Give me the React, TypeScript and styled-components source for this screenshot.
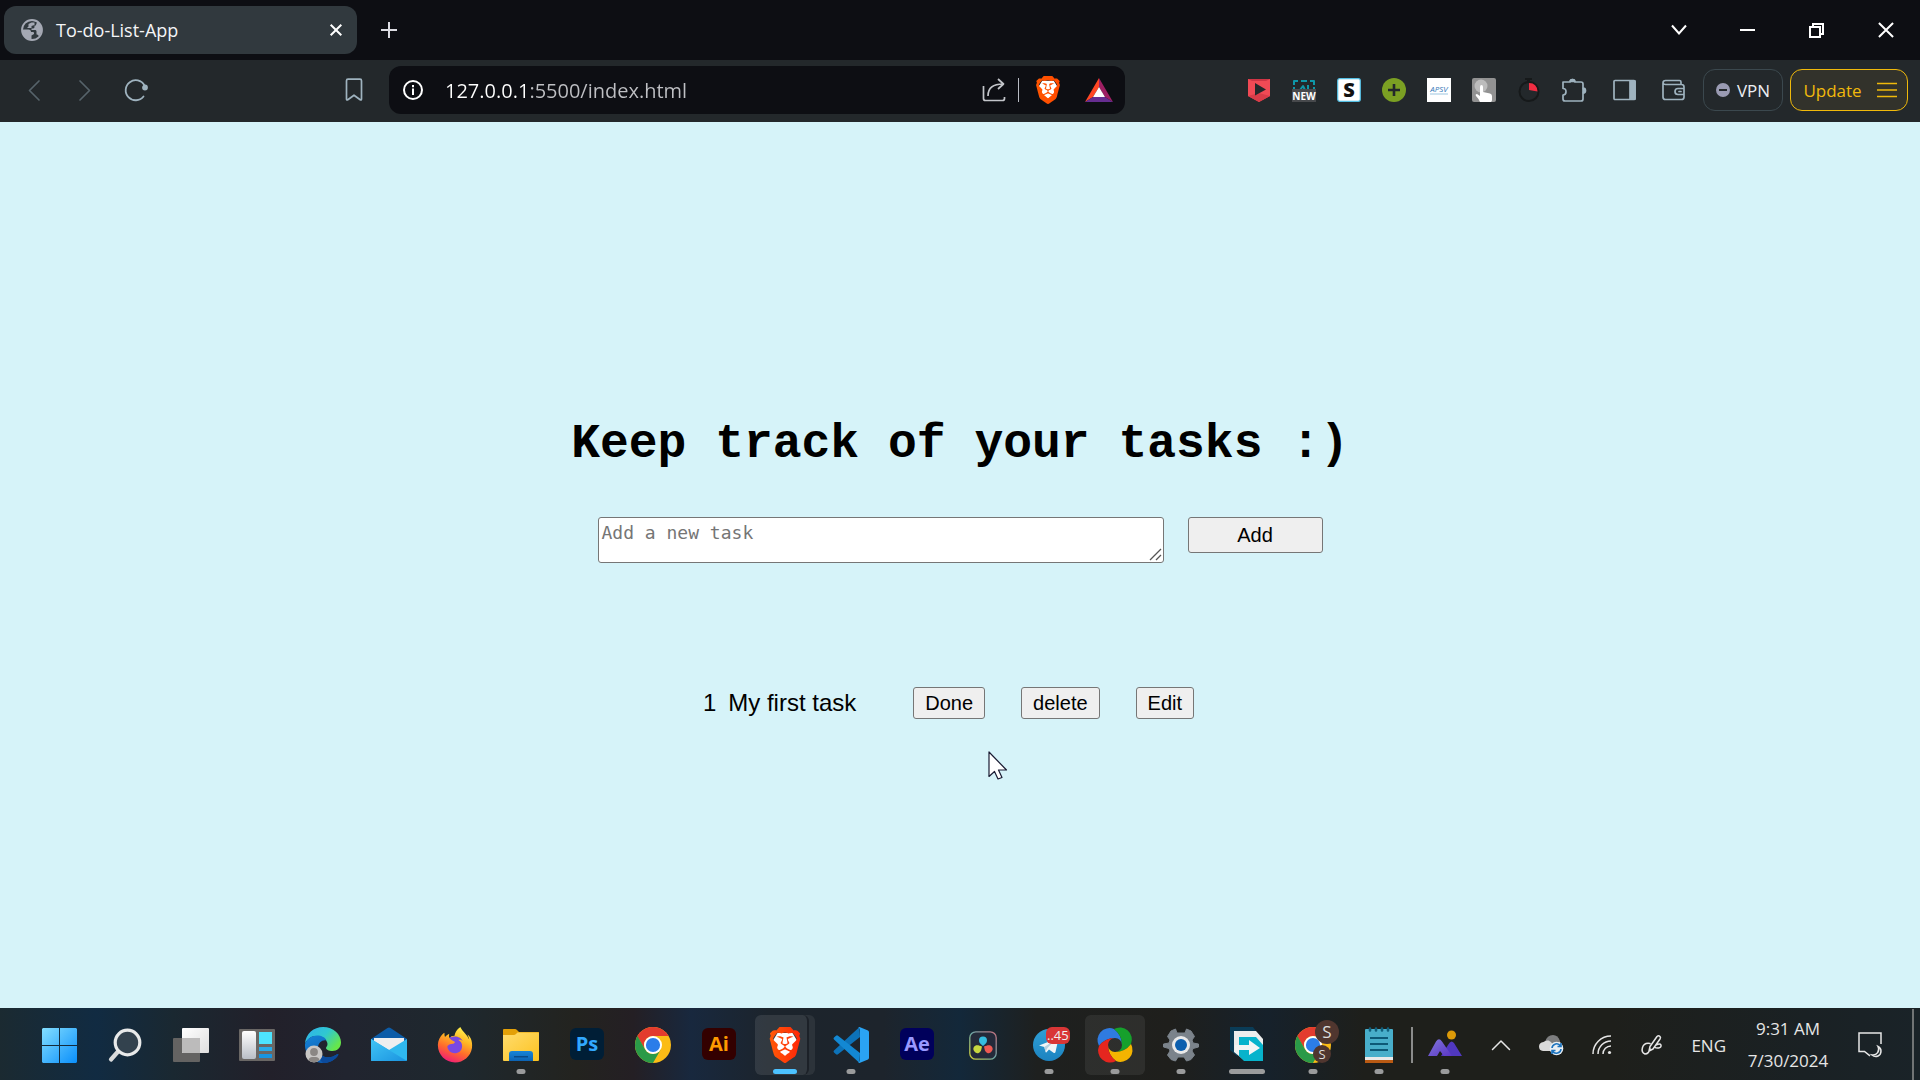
import React from 'react';
import styled, { createGlobalStyle } from 'styled-components';
import { SiBrave } from 'react-icons/si';
import { FaFirefoxBrowser } from 'react-icons/fa';

const GlobalStyle = createGlobalStyle`
  *, *::before, *::after { box-sizing: border-box; }
  body {
    margin: 0;
    font-family: "Open Sans", "Noto Sans", sans-serif;
    font-size: 17px;
  }
  button, input, textarea { font: inherit; }
  svg { display: block; flex: none; overflow: visible; }
`;

const Screen = styled.div`
  min-height: 100vh;
  display: flex;
  flex-direction: column;
`;

const PlainButton = styled.button`
  display: flex;
  align-items: center;
  justify-content: center;
  flex: none;
  padding: 0;
  border: 0;
  background: none;
  color: inherit;
  cursor: default;
`;

/* ---------- tab strip ---------- */

const TabStrip = styled.header`
  display: flex;
  align-items: center;
  height: 60px;
  padding-left: 4px;
  background: #0d0e13;
  color: #fff;
`;

const Tab = styled.div`
  display: flex;
  align-items: center;
  gap: 13px;
  width: 353px;
  height: 48px;
  padding: 0 11px 0 17px;
  border-radius: 12px;
  background: #31393e;
`;

const TabTitle = styled.span`
  flex: 1;
  color: #f4f5f7;
  font-size: 18px;
  line-height: 24px;
`;

const TabButton = styled(PlainButton)`
  width: 20px;
  height: 20px;
`;

const NewTabButton = styled(PlainButton)`
  width: 24px;
  height: 24px;
  margin-left: 20px;
`;

const WindowControls = styled.div`
  display: flex;
  margin-left: auto;
`;

const WindowButton = styled(PlainButton)`
  width: 69px;
  height: 60px;
`;

/* ---------- toolbar ---------- */

const Toolbar = styled.nav`
  display: flex;
  align-items: center;
  height: 62px;
  padding: 0 12px 2px 22px;
  background: #23282b;
  color: #9fb3bf;
`;

const NavGroup = styled.div`
  display: flex;
  gap: 27px;
`;

const ToolButton = styled(PlainButton)<{ $dim?: boolean }>`
  width: 24px;
  height: 24px;
  color: ${(p) => (p.$dim ? '#56636a' : 'inherit')};
`;

const AddressGroup = styled.div`
  display: flex;
  align-items: center;
  gap: 23px;
  margin-left: 194px;
`;

const AddressBar = styled.div`
  display: flex;
  align-items: center;
  width: 736px;
  height: 48px;
  padding: 0 12px;
  border-radius: 12px;
  background: #0d0e13;
  color: #fff;
`;

const AddressInput = styled.input`
  flex: 1;
  min-width: 0;
  height: 32px;
  margin: 0 20px;
  padding: 0;
  border: 0;
  outline: 0;
  background: linear-gradient(90deg, #fff 84px, #bfc0c4 84px);
  background-clip: text;
  -webkit-background-clip: text;
  color: transparent;
  caret-color: #fff;
  font-size: 20px;
`;

const BarDivider = styled.span`
  width: 1px;
  height: 24px;
  margin: 0 15px 0 12px;
  background: #b9bcc4;
`;

const BarButton = styled(PlainButton)`
  width: 28px;
  height: 28px;
`;

const RewardsButton = styled(BarButton)`
  margin-left: 23px;
`;

const Extensions = styled.div`
  display: flex;
  align-items: center;
  gap: 21px;
  margin-left: auto;
`;

const BrowserTools = styled.div`
  display: flex;
  align-items: center;
  gap: 26px;
  margin: 0 17px 0 20px;
`;

const VpnButton = styled(PlainButton)`
  gap: 7px;
  width: 80px;
  height: 42px;
  margin-right: 7px;
  border: 1px solid #3b484e;
  border-radius: 12px;
  color: #eceef2;
`;

const UpdateButton = styled(PlainButton)`
  gap: 15px;
  width: 118px;
  height: 42px;
  padding-left: 2px;
  border: 1px solid #f0b90b;
  border-radius: 12px;
  background: #32322b;
  color: #f0b90b;
`;

/* ---------- page ---------- */

const Page = styled.main`
  position: relative;
  flex: 1;
  display: flex;
  flex-direction: column;
  align-items: center;
  justify-content: center;
  background: #d6f3f9;
  color: #000;
  font-family: "Liberation Sans", Arial, sans-serif;
`;

const Heading = styled.h1`
  margin: 0 0 40px;
  font: bold 48px/66px "Liberation Mono", "Courier New", monospace;
`;

const TaskForm = styled.form`
  display: flex;
  align-items: flex-start;
  gap: 24px;
`;

const TaskInput = styled.textarea`
  width: 566px;
  height: 46px;
  padding: 3px;
  border: 1px solid #767676;
  border-radius: 3px;
  background: #fff;
  font: 18px/24px "DejaVu Sans Mono", monospace;
  overflow: hidden;
  resize: both;
  &::placeholder { color: #757575; opacity: 1; }
  &::-webkit-resizer {
    background: url("data:image/svg+xml,%3Csvg xmlns='http://www.w3.org/2000/svg' width='15' height='15'%3E%3Cpath d='M2 13L13 2M8 13l5-5' stroke='%23555' stroke-width='1.3'/%3E%3C/svg%3E") no-repeat;
  }
`;

const FormButton = styled.button<{ $wide?: boolean }>`
  width: ${(p) => (p.$wide ? '135px' : 'auto')};
  height: ${(p) => (p.$wide ? '36px' : '32px')};
  padding: 0 11px;
  border: 1px solid #767676;
  border-radius: 3px;
  background: #efefef;
  color: #000;
  font-size: 20px;
  line-height: 24px;
`;

const TaskList = styled.ol`
  margin: 124px 0 0;
  padding: 0 23px 0 0;
  list-style: none;
`;

const TaskRow = styled.li`
  display: flex;
  align-items: center;
  font-size: 24px;
  line-height: 32px;
`;

const TaskName = styled.span`
  margin: 0 57px 0 12px;
`;

const TaskActions = styled.div`
  display: flex;
  gap: 36px;
`;

const Pointer = styled.svg`
  position: absolute;
  left: calc(50% + 28px);
  top: calc(50% + 186px);
`;

/* ---------- taskbar ---------- */

const Taskbar = styled.footer`
  display: flex;
  align-items: center;
  height: 72px;
  padding: 2px 0 0 29px;
  color: #e6e6e6;
  background: linear-gradient(
    90deg,
    #1b2a31 0%, #112b42 5%, #1a2831 9%, #22202a 14%, #21242f 18%, #1e282e 24%,
    #23231f 30%, #241f24 33%, #18283e 36%, #1c242c 40%, #1d242c 46%, #13283a 50%,
    #1e201f 54%, #1f1f1c 61%, #16212b 66%, #1e1f1b 71%, #1e1f1b 84%, #1a2124 94%, #1a2328 100%
  );
`;

const Apps = styled.div`
  display: flex;
  gap: 6px;
`;

const AppButton = styled(PlainButton)<{ $active?: boolean }>`
  position: relative;
  width: 60px;
  height: 60px;
  border-radius: 6px;
  background: ${(p) => (p.$active ? 'rgba(255, 255, 255, 0.07)' : 'none')};
`;

const StackedTile = styled.span`
  position: absolute;
  inset: 0 6px 0 0;
  border-radius: 6px;
  border-right: 2px solid #1c2128;
  background: rgba(255, 255, 255, 0.03);
`;

const Indicator = styled.span<{ $width: number; $accent?: boolean }>`
  position: absolute;
  left: 50%;
  bottom: 1px;
  width: ${(p) => p.$width}px;
  height: 5px;
  border-radius: 3px;
  transform: translateX(-50%);
  background: ${(p) => (p.$accent ? '#4cc2ff' : '#9a9b9c')};
`;

const AdobeTile = styled.span<{ $bg: string; $fg: string }>`
  display: flex;
  align-items: center;
  justify-content: center;
  width: 34px;
  height: 32px;
  margin-bottom: 3px;
  border-radius: 6px;
  background: ${(p) => p.$bg};
  color: ${(p) => p.$fg};
  font-size: 20px;
  font-weight: 700;
  line-height: 32px;
`;

const Badge = styled.span`
  position: absolute;
  left: 27px;
  top: 12px;
  padding: 0 1px;
  border-radius: 6px;
  background: #d93636;
  color: #f0f0f0;
  font-size: 13px;
  line-height: 17px;
`;

const ProfileDot = styled.span<{ $large?: boolean }>`
  position: absolute;
  left: ${(p) => (p.$large ? '32px' : '30px')};
  top: ${(p) => (p.$large ? '5px' : '30px')};
  width: ${(p) => (p.$large ? '24px' : '18px')};
  height: ${(p) => (p.$large ? '24px' : '18px')};
  border-radius: 50%;
  background: #50362f;
  color: #ddd;
  font-size: ${(p) => (p.$large ? '17px' : '13px')};
  line-height: ${(p) => (p.$large ? '24px' : '18px')};
  text-align: center;
`;

const TaskDivider = styled.span`
  align-self: center;
  width: 2px;
  height: 36px;
  margin: 0 -4px;
  background: #8b8c8b;
`;

const Tray = styled.div`
  display: flex;
  align-items: center;
  height: 72px;
  margin-left: auto;
`;

const TrayIcons = styled.div`
  display: flex;
  align-items: center;
  gap: 27px;
`;

const TrayButton = styled(PlainButton)`
  height: 40px;
`;

const Clock = styled.time`
  width: 96px;
  margin-left: 14px;
  text-align: center;
  line-height: 32px;
`;

const NotificationButton = styled(TrayButton)`
  margin: 0 30px 0 22px;
`;

const ShowDesktop = styled(PlainButton)`
  width: 8px;
  height: 72px;
  border-left: 2px solid #717475;
`;

/* ---------- drawings ---------- */

const GlobeIcon = () => (
  <svg width="22" height="22" viewBox="0 0 22 22">
    <circle cx="11" cy="11" r="10" fill="#31393e" stroke="#a5a9b4" strokeWidth="1.8" />
    <path fill="#a5a9b4" d="M11 1c5 0 9.500 4 9.500 9.500 0 3-1 5-2.600 6.500-.8-.9-1.200-1.600-2.400-1.600v-2.800c0-1-.7-1.500-1.500-1.500h-3.500V9.400h1.700c.8 0 1.300-.6 1.300-1.400V6.500h1.300L16 3.200 11 1z" />
    <path fill="#a5a9b4" d="M1.500 10.500h6q2.500 0 2.500 2.500h2q1.500 0 1 2l-2.500 1.500V20.500C5 20.600 1 16.500 1.500 10.500z" />
    <path fill="#a5a9b4" d="M10.500 3.500L7.500 5v2.500L6 9h4.500V7l3-1V3.500z" />
  </svg>
);

const CrossIcon = ({ size = 12, stroke = 2 }: { size?: number; stroke?: number }) => (
  <svg width={size} height={size} viewBox="0 0 12 12" stroke="currentColor" strokeWidth={stroke}>
    <path d="M.7.7l10.600 10.600M11.300.7L.7 11.300" />
  </svg>
);

const LionIcon = ({ size, id }: { size: number; id: string }) => (
  <svg width={size} height={size} viewBox="0 0 24 24">
    <defs>
      <linearGradient id={id} x1="0" x2="1">
        <stop offset="0" stopColor="#ff5500" />
        <stop offset="1" stopColor={id === 'lionBar' ? '#ff4a00' : '#ff2000'} />
      </linearGradient>
    </defs>
    <path fill="#fff" d="M7 4h10l3 5-2 7-6 5-6-5-2-7z" />
    <SiBrave size={24} fill={`url(#${id})`} />
  </svg>
);

const ChromeIcon = ({ id }: { id: string }) => (
  <svg width="36" height="36" viewBox="0 0 36 36">
    <clipPath id={id}><circle cx="18" cy="18" r="18" /></clipPath>
    <g clipPath={`url(#${id})`}>
      <rect width="36" height="36" fill="#fbbc16" />
      <path fill="#e33b2e" d="M0 0h36v9H18a9 9 0 0 0-7.800 13.500L2 9z" />
      <path fill="#2a9a48" d="M2.400 9l7.800 13.500A9 9 0 0 0 25.800 22.500L18 36H0V9z" />
    </g>
    <circle cx="18" cy="18" r="9" fill="#fff" />
    <circle cx="18" cy="18" r="7.100" fill="#2b7de9" />
  </svg>
);

const StartIcon = () => (
  <svg width="35" height="35" viewBox="0 0 35 35">
    <linearGradient id="win" x1="0" y1="0" x2="1" y2="1" gradientUnits="objectBoundingBox">
      <stop offset="0" stopColor="#83deff" /><stop offset="1" stopColor="#0a8ffb" />
    </linearGradient>
    <path fill="url(#win)" d="M1 0h16v17H0V1zM18 0h16l1 1v16H18zM0 18h17v17H1l-1-1zM18 18h17v16l-1 1H18z" />
  </svg>
);

const SearchIcon = () => (
  <svg width="34" height="36" viewBox="0 0 34 36">
    <path d="M10.500 24L3 32.500" stroke="#d9dbdc" strokeWidth="4.200" strokeLinecap="round" />
    <circle cx="19.500" cy="15.500" r="12.300" fill="#33424e" stroke="#e9eaea" strokeWidth="3.200" />
  </svg>
);

const TaskViewIcon = () => (
  <svg width="36" height="36" viewBox="0 0 36 36">
    <linearGradient id="tv" x1="0" y1="0" x2="1" y2="1"><stop offset="0" stopColor="#fff" /><stop offset="1" stopColor="#dedede" /></linearGradient>
    <rect y="11" width="27" height="24" rx="1" fill="#646362" />
    <rect x="9" y="1" width="27" height="25" rx="1" fill="url(#tv)" />
    <path d="M9 11h18v15H10l-1-1z" fill="#bcbbbb" />
  </svg>
);

const WidgetsIcon = () => (
  <svg width="36" height="36" viewBox="0 0 36 36">
    <linearGradient id="wg" x1="0" y1="0" x2="0" y2="1"><stop offset="0" stopColor="#fff" /><stop offset="1" stopColor="#b9bec6" /></linearGradient>
    <rect y="2" width="36" height="32" rx="1" fill="#6a6765" />
    <rect x="3" y="4" width="14" height="28" rx="2" fill="url(#wg)" />
    <path fill="#4de4ff" d="M20 5h13v12H20z" /><path fill="#29abe9" d="M20 20h13v4H20z" /><path fill="#1795e2" d="M20 27h13v4H20z" />
  </svg>
);

const EdgeIcon = () => (
  <svg width="36" height="36" viewBox="0 0 36 36">
    <linearGradient id="edTop" x1="0" y1="0" x2="1" y2=".6"><stop offset="0" stopColor="#2fb0ee" /><stop offset=".55" stopColor="#30c8d0" /><stop offset="1" stopColor="#66e64a" /></linearGradient>
    <linearGradient id="edLow" x1="0" y1="0" x2=".5" y2="1"><stop offset="0" stopColor="#1584d8" /><stop offset="1" stopColor="#0c5bb0" /></linearGradient>
    <path fill="url(#edTop)" d="M0 17C.5 6.500 9 0 18 0c10.500 0 18 7.500 18 15.500 0 5-4 8.500-8.500 8.500-4 0-6.500-1.500-6.500-3 0-1 1.500-1.700 1.500-4C22 12 17 9 11.500 9 6 9 2 12.500 0 17z" />
    <path fill="url(#edLow)" d="M0 17C2 12 6.500 8.500 12 8.500c4.500 0 8.500 2 9.500 5-4-1-8.500 2-8.500 7.500C13 28 20 31.500 26 30c3-.6 5-2.300 6.500-3 .8-.2 1 .5.6 1.200C30 33 24.500 36 18 36 7 36-.5 27 0 17z" />
    <path fill="#0b4a9c" d="M13 20c0 8 6.500 11.500 13 10 3-.6 5-2.300 6.500-3 .8-.2 1 .5.6 1.200C30 33 24.500 36 18 36c-4-4-6-9-5-16z" />
    <circle cx="9" cy="27" r="8.500" fill="#c9c7c5" />
    <circle cx="9" cy="25" r="3.900" fill="#8b8784" />
    <path fill="#8b8784" d="M3.500 33.300C4 30.500 6 30 9 30s5 .5 5.500 3.300A8.500 8.500 0 0 1 3.500 33.300z" />
  </svg>
);

const MailIcon = () => (
  <svg width="36" height="36" viewBox="0 0 36 36">
    <linearGradient id="ml" x1="0" y1="0" x2="1" y2="1"><stop offset="0" stopColor="#41c5f5" /><stop offset="1" stopColor="#1a93e0" /></linearGradient>
    <path fill="#0c5ca8" d="M0 12L16.500 1q1.500-1 3 0L36 12v7H0z" />
    <path fill="#eeeeef" d="M3 11h30v5L18 25 3 16z" />
    <path fill="#2fb8ee" d="M36 12v21q0 1-1 1H1q-1 0-1-1V12l18 11z" />
    <path fill="url(#ml)" d="M0 12l36 22H1q-1 0-1-1z" />
  </svg>
);

const FirefoxIcon = () => (
  <svg width="36" height="36" viewBox="0 0 36 36">
    <linearGradient id="ff" x1=".7" y1="0" x2=".3" y2="1">
      <stop offset="0" stopColor="#fff44f" /><stop offset=".35" stopColor="#ffb524" /><stop offset=".65" stopColor="#ff6a2c" /><stop offset="1" stopColor="#f0197a" />
    </linearGradient>
    <circle cx="17.500" cy="19" r="10" fill="#7a48e2" />
    <FaFirefoxBrowser size={36} fill="url(#ff)" />
  </svg>
);

const FolderIcon = () => (
  <svg width="36" height="36" viewBox="0 0 36 36">
    <linearGradient id="fd" x1="0" y1="0" x2="1" y2="1"><stop offset="0" stopColor="#ffdc6e" /><stop offset="1" stopColor="#fcc21f" /></linearGradient>
    <linearGradient id="fb" x1="0" y1="0" x2="0" y2="1"><stop offset="0" stopColor="#1785d8" /><stop offset="1" stopColor="#0c63b3" /></linearGradient>
    <path fill="#e3a008" d="M0 3q0-1 1-1h11q1 0 2 1l2 2H36v8H0z" />
    <path fill="url(#fd)" d="M0 8h11q1 0 2-1l1.500-1.500H35q1 0 1 1V33q0 1-1 1H1q-1 0-1-1z" />
    <path fill="url(#fb)" d="M6 34V27q0-3 3-3h18q3 0 3 3v7z" />
    <path fill="#0a4a86" d="M11 29h14v1.500H11z" />
  </svg>
);

const CodeIcon = () => (
  <svg width="36" height="36" viewBox="0 0 36 36">
    <path fill="#0d72b8" d="M26.500 0L1 23.500q-1 1 0 2l2 1.800q1 .8 2 0L27 10z" />
    <path fill="#1388d3" d="M26.500 36L1 12.500q-1-1 0-2l2-1.800q1-.8 2 0L27 26z" />
    <path fill="#2aa3f3" d="M26.500 0L35 3.500q1 .5 1 1.700v25.600q0 1.200-1 1.700L26.500 36 25 35q2 .5 2-2V3q0-2.500-2-2z" />
  </svg>
);

const ResolveIcon = () => (
  <svg width="28" height="29" viewBox="0 0 28 29">
    <linearGradient id="rsB" x1="0" y1="1" x2="1" y2="0"><stop offset="0" stopColor="#d5d335" /><stop offset=".5" stopColor="#6ba5a5" /><stop offset="1" stopColor="#c76f7e" /></linearGradient>
    <rect x=".8" y=".8" width="26.400" height="27.400" rx="6" fill="#242a3a" stroke="url(#rsB)" strokeWidth="1.300" />
    <path fill="#35bde0" d="M14 15c-2-2-4-3-4-5.500a4 4 0 0 1 8 0c0 2.500-2 3.500-4 5.500z" />
    <path fill="#c8d740" d="M13 15.500c-.7 2.700-.6 5-2.800 6.200a4 4 0 0 1-4-6.900c2.200-1.200 4.200-.1 6.800.7z" />
    <path fill="#ee5a52" d="M15 15.500c.7 2.700.6 5 2.800 6.200a4 4 0 0 0 4-6.900c-2.200-1.200-4.200-.1-6.800.7z" />
  </svg>
);

const TelegramIcon = () => (
  <svg width="36" height="36" viewBox="0 0 36 36">
    <linearGradient id="tg" x1="0" y1="0" x2="0" y2="1"><stop offset="0" stopColor="#2f9fd6" /><stop offset="1" stopColor="#1c83c0" /></linearGradient>
    <circle cx="18" cy="18" r="16" fill="url(#tg)" />
    <path fill="#f2f5f7" d="M8 18.500L26 11.500q1.500-.4 1.200 1.300L24.500 25q-.5 1.500-2 .7L18 22.400l-2.500 2.800q-.8.6-1-.5L13.300 20z" />
    <path fill="#b9d0df" d="M13.300 20L24 13l-7.500 8-2 3.700z" />
  </svg>
);

const ringPetal = 'M17 2A12 12 0 0 1 34 17Q28 25 18 25A7 7 0 0 0 25 18Q25 8 17 2z';

const RingIcon = () => (
  <svg width="36" height="36" viewBox="0 0 36 36">
    <path fill="#2f7be0" d={ringPetal} transform="rotate(270 18 18)" />
    <path fill="#16a02c" d={ringPetal} />
    <path fill="#f4b400" d={ringPetal} transform="rotate(90 18 18)" />
    <path fill="#e5261f" d={ringPetal} transform="rotate(180 18 18)" />
  </svg>
);

const GearIcon = () => (
  <svg width="36" height="36" viewBox="0 0 36 36">
    <path fill="#7b838b" stroke="#7b838b" strokeLinejoin="round" d="M14 6L12.500 2 8 4 4.500 9.500 7 13l-1 3-5.500 1v3L6 21.500l1 2.500-2.500 4 3.500 4.500 4.500 1.500 2.500-4h6l2.500 4 4.500-1.500 3.500-4.500-2.500-4 1-2.500 5.500-1.500v-3l-5.500-1-1-3 2.500-3.500L28 4l-4.500-2L22 6z" />
    <circle cx="18" cy="18" r="9" fill="#e9e9e9" />
    <circle cx="18" cy="18" r="6" fill="#0c5fae" />
  </svg>
);

const ArrowAppIcon = () => (
  <svg width="36" height="36" viewBox="0 0 36 36">
    <path fill="#0a3c57" d="M1 0h23l3 4-19 25L1 23z" />
    <path fill="#eceeee" d="M5 4h22l7 8v22H16L5 25z" />
    <path fill="#07b3cc" d="M10 10h17l7 8v16H15l-5-5z" />
    <path fill="#f3f5f5" d="M6 18h14v-5l11 8-11 7v-5H6z" />
  </svg>
);

const NotepadIcon = () => (
  <svg width="30" height="36" viewBox="0 0 30 36">
    <path fill="#b95a13" d="M1 31h28v5H1z" /><path fill="#e9e9e9" d="M1 29h28v4H1z" />
    <path fill="#48aeca" d="M2 2h26q1 0 1 1v27H1V3q0-1 1-1z" />
    <path stroke="#0d5977" strokeWidth="2" d="M6 11h18M6 17h18M6 23h18" />
    <path stroke="#11607d" strokeWidth="2.600" strokeLinecap="round" d="M6 1.500v2M12 1.500v2M18 1.500v2M24 1.500v2" />
  </svg>
);

const PeaksIcon = () => (
  <svg width="36" height="36" viewBox="0 0 36 36">
    <linearGradient id="pk" x1="0" y1="0" x2="1" y2="1"><stop offset="0" stopColor="#8177d8" /><stop offset="1" stopColor="#5a35c6" /></linearGradient>
    <circle cx="24.500" cy="8" r="4.500" fill="#dc9a08" />
    <path fill="#5038bf" d="M14 29l7-11q3-6 6-2l8 13z" />
    <path fill="url(#pk)" d="M1 29L9 14.500q3-4.500 6 0L25 29h-8l-4-5-3 5z" />
  </svg>
);

const lineProps = { fill: 'none', stroke: 'currentColor', strokeLinecap: 'round' as const, strokeLinejoin: 'round' as const };

const adobe = (label: string, bg: string, fg: string) => <AdobeTile $bg={bg} $fg={fg}>{label}</AdobeTile>;

interface AppItem {
  name: string;
  icon: React.ReactNode;
  bar?: number;
  accent?: boolean;
  active?: boolean;
}

const pinnedApps: AppItem[] = [
  { name: 'Start', icon: <StartIcon /> },
  { name: 'Search', icon: <SearchIcon /> },
  { name: 'Task view', icon: <TaskViewIcon /> },
  { name: 'Widgets', icon: <WidgetsIcon /> },
  { name: 'Edge', icon: <EdgeIcon /> },
  { name: 'Mail', icon: <MailIcon /> },
  { name: 'Firefox', icon: <FirefoxIcon /> },
  { name: 'File Explorer', icon: <FolderIcon />, bar: 9 },
  { name: 'Photoshop', icon: adobe('Ps', '#001e36', '#31a8ff') },
  { name: 'Chrome', icon: <ChromeIcon id="chromeA" /> },
  { name: 'Illustrator', icon: adobe('Ai', '#330000', '#ff9a00') },
  { name: 'Brave', icon: <><StackedTile /><LionIcon size={36} id="lionTask" /></>, bar: 24, accent: true, active: true },
  { name: 'Visual Studio Code', icon: <CodeIcon />, bar: 9 },
  { name: 'After Effects', icon: adobe('Ae', '#00005b', '#9999ff') },
  { name: 'DaVinci Resolve', icon: <ResolveIcon /> },
  { name: 'Telegram', icon: <><TelegramIcon /><Badge>..45</Badge></>, bar: 9 },
  { name: 'Screen recorder', icon: <RingIcon />, bar: 9, active: true },
  { name: 'Settings', icon: <GearIcon />, bar: 9 },
  { name: 'File transfer', icon: <ArrowAppIcon />, bar: 36 },
  { name: 'Chrome profile', icon: <><ChromeIcon id="chromeB" /><ProfileDot $large>S</ProfileDot><ProfileDot>S</ProfileDot></>, bar: 9 },
  { name: 'Notepad', icon: <NotepadIcon />, bar: 9 },
];

const TaskbarApp = ({ item }: { item: AppItem }) => (
  <AppButton aria-label={item.name} $active={item.active}>
    {item.icon}
    {item.bar && <Indicator $width={item.bar} $accent={item.accent} />}
  </AppButton>
);

const extensions: { name: string; icon: React.ReactNode }[] = [
  { name: 'Video', icon: (
    <svg width="24" height="24" viewBox="0 0 24 24">
      <path fill="#f04a55" d="M1 1h22v17l-11 6-11-6z" /><path fill="#cf3545" d="M1 1h22l-4 2H5z" /><path fill="#d93c49" d="M1 18l11-3 11 3-11 6z" />
      <path fill="#23282b" d="M8 5l11 6.500-11 6z" />
    </svg>) },
  { name: 'Capture', icon: (
    <svg width="24" height="24" viewBox="0 0 24 24">
      <path {...lineProps} stroke="#0f97a8" strokeWidth="2" strokeLinecap="butt" d="M2 7V3h4M9 3h6M18 3h4v4M2 9v3M22 9v3M8 12l3-4 2 4M16 7v5" />
      <path fill="#47494c" d="M0 11h24v13H0z" />
      <text x="12" y="21.500" textAnchor="middle" fontFamily="Open Sans" fontSize="10" fontWeight="700" fill="#fff">NEW</text>
    </svg>) },
  { name: 'S', icon: (
    <svg width="24" height="24" viewBox="0 0 24 24">
      <rect x=".7" y=".7" width="22.600" height="22.600" rx="2" fill="#fff" stroke="#54bfe4" strokeWidth="1.200" />
      <text x="12" y="19" textAnchor="middle" fontFamily="Open Sans" fontSize="20" fontWeight="800" fill="#111">S</text>
    </svg>) },
  { name: 'Add', icon: (
    <svg width="24" height="24" viewBox="0 0 24 24">
      <circle cx="12" cy="12" r="12" fill="#7ba023" /><path stroke="#23282b" strokeWidth="2.600" d="M12 6v12M6 12h12" />
    </svg>) },
  { name: 'APSV', icon: (
    <svg width="24" height="24" viewBox="0 0 24 24">
      <path fill="#fff" d="M0 0h24v24H0z" />
      <text x="12" y="14" textAnchor="middle" fontFamily="Open Sans" fontSize="8" fontStyle="italic" fill="#3478b8">APSV</text>
      <path stroke="#9dc5df" d="M3 16h18" />
    </svg>) },
  { name: 'Clicker', icon: (
    <svg width="24" height="24" viewBox="0 0 24 24">
      <rect width="24" height="24" rx="2" fill="#929292" /><circle cx="9" cy="8" r="6.500" fill="#bcbcbc" />
      <path fill="#fff" d="M8 9q0-2 1.500-2T11 9v5l7 1.500q2 .5 2 2.500v4q0 1-1 2H8q-1-3-4-6-1-2 1-2l3 2z" />
    </svg>) },
  { name: 'Timer', icon: (
    <svg width="24" height="24" viewBox="0 0 24 24">
      <circle cx="12" cy="13.500" r="9.500" fill="none" stroke="#16191a" strokeWidth="2" />
      <path fill="#16191a" d="M8 0h7v2h-2v2h-3V2H8z" /><path fill="#f02d42" d="M12 5q8 0 8.500 8.500L12 12z" />
    </svg>) },
];

export default function App() {
  return (
    <Screen>
      <GlobalStyle />
      <TabStrip>
        <Tab>
          <GlobeIcon />
          <TabTitle>To-do-List-App</TabTitle>
          <TabButton aria-label="Close tab"><CrossIcon stroke={2} /></TabButton>
        </Tab>
        <NewTabButton aria-label="New tab">
          <svg width="16" height="16" viewBox="0 0 16 16" stroke="#dcdce2" strokeWidth="2"><path d="M8 0v16M0 8h16" /></svg>
        </NewTabButton>
        <WindowControls>
          <WindowButton aria-label="Search tabs">
            <svg width="16" height="12" viewBox="0 0 16 12" {...lineProps} strokeWidth="2" strokeLinecap="butt" strokeLinejoin="miter"><path d="M1 1.500l7 8 7-8" /></svg>
          </WindowButton>
          <WindowButton aria-label="Minimize">
            <svg width="15" height="2" viewBox="0 0 15 2"><path fill="#fff" d="M0 0h15v2H0z" /></svg>
          </WindowButton>
          <WindowButton aria-label="Restore">
            <svg width="15" height="15" viewBox="0 0 15 15" fill="none" stroke="#fff" strokeWidth="2"><path d="M1 4h10v10H1zM4 4V1h10v10h-3" /></svg>
          </WindowButton>
          <WindowButton aria-label="Close"><CrossIcon size={16} stroke={1.5} /></WindowButton>
        </WindowControls>
      </TabStrip>

      <Toolbar>
        <NavGroup>
          <ToolButton aria-label="Back" $dim>
            <svg width="12" height="21" viewBox="0 0 12 21" {...lineProps} strokeWidth="1.700"><path d="M11 1L1.500 10.500 11 20" /></svg>
          </ToolButton>
          <ToolButton aria-label="Forward" $dim>
            <svg width="12" height="21" viewBox="0 0 12 21" {...lineProps} strokeWidth="1.700"><path d="M1 1l9.500 9.500L1 20" /></svg>
          </ToolButton>
          <ToolButton aria-label="Reload">
            <svg width="24" height="24" viewBox="0 0 24 24" {...lineProps} strokeWidth="1.800"><path d="M20.500 7.500A10 10 0 1 0 19.500 18.500" /><circle cx="21" cy="9.500" r="2" fill="currentColor" /></svg>
          </ToolButton>
        </NavGroup>
        <AddressGroup>
          <ToolButton aria-label="Bookmark">
            <svg width="18" height="24" viewBox="0 0 18 24" {...lineProps} strokeWidth="1.700"><path d="M3 1.200h12q1.500 0 1.500 1.500V21q0 1.500-1.300.7L9 17.200l-6.200 4.500q-1.300.8-1.300-.7V2.700q0-1.500 1.500-1.500z" /></svg>
          </ToolButton>
          <AddressBar>
            <PlainButton aria-label="Site information">
              <svg width="24" height="24" viewBox="0 0 24 24"><circle cx="12" cy="12" r="9" fill="none" stroke="#fff" strokeWidth="2" /><path fill="#fff" d="M11 7h2v2.200h-2zM11 10.500h2V17h-2z" /></svg>
            </PlainButton>
            <AddressInput aria-label="Address" defaultValue="127.0.0.1:5500/index.html" />
            <PlainButton aria-label="Share">
              <svg width="24" height="24" viewBox="0 0 24 24" fill="none" stroke="#c3c5ca" strokeWidth="1.700" strokeLinejoin="round"><path d="M1.500 8v12.500q0 2 2 2h17q2 0 2-2V19M6 18C6 10 11 6 21 6M16 1l5.500 5-5.500 5" /></svg>
            </PlainButton>
            <BarDivider />
            <BarButton aria-label="Shields"><LionIcon size={28} id="lionBar" /></BarButton>
            <RewardsButton aria-label="Rewards">
              <svg width="28" height="24" viewBox="0 0 28 24"><path fill="#ff4724" d="M14 0v9L8 19l-8 5z" /><path fill="#9e1f63" d="M14 0l14 24-8-5-6-10z" /><path fill="#662d91" d="M0 24l8-5h12l8 5z" /><path fill="#fff" d="M14 9l6 10H8z" /></svg>
            </RewardsButton>
          </AddressBar>
        </AddressGroup>
        <Extensions>
          {extensions.map((e) => <PlainButton key={e.name} aria-label={e.name}>{e.icon}</PlainButton>)}
        </Extensions>
        <BrowserTools>
          <PlainButton aria-label="Extensions">
            <svg width="26" height="26" viewBox="0 0 26 26" {...lineProps} strokeWidth="1.700"><path d="M2 5h7q0-2.500 2.500-2.500T14 5h6q2 0 2 2v4q2.500 0 2.500 2.500T22 16v6q0 2-2 2H4q-2 0-2-2v-4q3 0 3-3.300T2 11.500z" /><path fill="currentColor" d="M9.500 4.500q0-2 2-2t2 2zM22 11.500q2 0 2 2t-2 2z" /></svg>
          </PlainButton>
          <PlainButton aria-label="Sidebar">
            <svg width="23" height="22" viewBox="0 0 23 22" {...lineProps} strokeWidth="1.700"><rect x="1" y="1.500" width="21" height="19" rx="1" /><path fill="currentColor" d="M17 2h5v18h-5z" /></svg>
          </PlainButton>
          <PlainButton aria-label="Wallet">
            <svg width="24" height="22" viewBox="0 0 24 22" {...lineProps} strokeWidth="1.700"><path d="M19 5V3q0-1.500-1.500-1.500h-14Q1 1.500 1 4v14q0 2.500 2.500 2.500h16q2.500 0 2.500-2.500V8q0-2.500-2.500-2.500h-16Q1.500 5.500 1 4M22 9.500h-6q-3 0-3 3t3 3h6M17 12.500h2" /></svg>
          </PlainButton>
        </BrowserTools>
        <VpnButton>
          <svg width="14" height="14" viewBox="0 0 14 14"><circle cx="7" cy="7" r="7" fill="#9a9bb3" /><path fill="#23282b" d="M3 6h8v2H3z" /></svg>
          VPN
        </VpnButton>
        <UpdateButton>
          Update
          <svg width="20" height="16" viewBox="0 0 20 16" stroke="currentColor" strokeWidth="1.500"><path d="M0 1.500h20M0 8h20M0 14.500h20" /></svg>
        </UpdateButton>
      </Toolbar>

      <Page>
        <Heading>Keep track of your tasks :)</Heading>
        <TaskForm onSubmit={(e) => e.preventDefault()}>
          <TaskInput aria-label="Add a new task" placeholder="Add a new task" />
          <FormButton $wide type="submit">Add</FormButton>
        </TaskForm>
        <TaskList>
          <TaskRow>
            <span>1</span>
            <TaskName>My first task</TaskName>
            <TaskActions>
              <FormButton>Done</FormButton>
              <FormButton>delete</FormButton>
              <FormButton>Edit</FormButton>
            </TaskActions>
          </TaskRow>
        </TaskList>
        <Pointer width="20" height="30" viewBox="0 0 20 30">
          <path fill="#fff" stroke="#1a1b33" strokeWidth="1.200" strokeLinejoin="round" d="M1 1v24.500l5.500-5L10 28l4-1.500-3.500-7.500H18.500z" />
        </Pointer>
      </Page>

      <Taskbar>
        <Apps>
          {pinnedApps.map((item) => <TaskbarApp key={item.name} item={item} />)}
          <TaskDivider />
          <TaskbarApp item={{ name: 'Peaks', icon: <PeaksIcon />, bar: 9 }} />
        </Apps>
        <Tray>
          <TrayIcons>
            <TrayButton aria-label="Show hidden icons">
              <svg width="20" height="12" viewBox="0 0 20 12" {...lineProps} strokeWidth="1.500"><path d="M1.500 10.500L10 2l8.500 8.500" /></svg>
            </TrayButton>
            <TrayButton aria-label="OneDrive">
              <svg width="26" height="24" viewBox="0 0 26 24">
                <path fill="#7d7e7f" d="M7 9q2-7 8-7 5 0 7 6v6H8z" /><path fill="#d9d9d9" d="M5 18q-4-.5-4-4.500T5.500 9q2-2 5-1.500 3 1 4 3.500l7-2q3 1 3 5l-6 4z" />
                <circle cx="18.500" cy="15.500" r="6.800" fill="#e9eef3" />
                <path fill="none" stroke="#1b72bd" strokeWidth="1.600" d="M14 15a4.600 4.600 0 0 1 8.500-2M23 16a4.600 4.600 0 0 1-8.500 2M23 10v3.500h-3.500M14 21v-3.500h3.500" />
              </svg>
            </TrayButton>
            <TrayButton aria-label="Network">
              <svg width="22" height="22" viewBox="0 0 22 22" {...lineProps} strokeWidth="1.500" strokeLinecap="butt"><path d="M2 20A18 18 0 0 1 20 2M7 20A13 13 0 0 1 20 7M12 20a8 8 0 0 1 8-8" /><circle cx="18.500" cy="18.500" r="1.600" fill="currentColor" stroke="none" /></svg>
            </TrayButton>
            <TrayButton aria-label="Pen menu">
              <svg width="24" height="22" viewBox="0 0 24 22" {...lineProps} strokeWidth="1.500"><path d="M9 17l1-4.500L17 2.500q1.500-1.500 3 0 1 1 0 2.500L13 15zM10 9.500q-6-1-7.500 4T5 20q4 0 5-5.500M16 11q4-2 5 0 .5 2.500-2.500 3-2.500.3-4-1" /></svg>
            </TrayButton>
            <span>ENG</span>
          </TrayIcons>
          <Clock>9:31 AM<br />7/30/2024</Clock>
          <NotificationButton aria-label="Notifications">
            <svg width="24" height="26" viewBox="0 0 24 26" fill="none" stroke="currentColor" strokeWidth="1.500"><path d="M23 12V1H1v18.500h5.500l5.500 4.300M20 14.500a5.800 5.800 0 0 1-6 8.500c4 3.500 9 .5 9-4 0-2-1-3.500-3-4.500z" /></svg>
          </NotificationButton>
          <ShowDesktop aria-label="Show desktop" />
        </Tray>
      </Taskbar>
    </Screen>
  );
}
